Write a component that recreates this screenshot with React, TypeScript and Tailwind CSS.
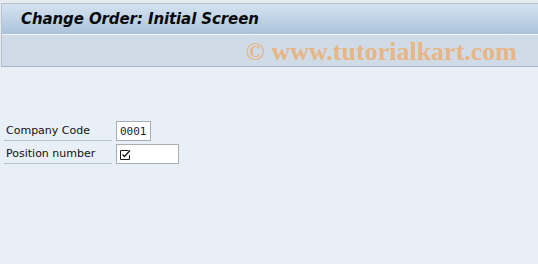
import React from "react";

function CheckGlyph() {
  return (
    <svg width="11" height="11" viewBox="0 0 11 11" className="block">
      <path d="M0.5 1.5 H8.5 M0.5 1.5 V10.5 H9.5 V6" stroke="#1a1a1a" strokeWidth="1" fill="none" />
      <path d="M2.5 5.5 L4.5 7.5 L10 1.5" stroke="#1a1a1a" strokeWidth="1.3" fill="none" />
    </svg>
  );
}

export default function App() {
  const rows = [
    { label: "Company Code", width: "w-[35px]", value: "0001" },
    { label: "Position number", width: "w-[63px]", value: "" },
  ];

  return (
    <div className="w-[538px] h-[264px] bg-[#e9eff7] overflow-hidden font-['DejaVu_Sans',sans-serif]">
      {/* Header frame */}
      <div className="pt-[3px] bg-[#e6ebf0]">
        <div className="ml-[1px] border-l border-t border-[#b4c0cc]">
          <div className="h-[30px] bg-gradient-to-b from-[#d6e3f0] to-[#abc3db] flex items-center pl-[19px]">
            <span className="text-[15px] font-bold italic text-[#0a0a0a] tracking-[-0.1px] leading-none">
              Change Order: Initial Screen
            </span>
          </div>
          <div className="h-[1px] bg-[#f2f6fa]" />
          <div className="h-[32px] bg-[#cfdce8] border-b border-[#a8b5c2] flex items-center justify-end pr-[21px]">
            <span className="font-['Liberation_Serif',serif] font-bold text-[26px] leading-none text-[#e8b584] pt-[2px]">
              © www.tutorialkart.com
            </span>
          </div>
        </div>
      </div>

      {/* Form */}
      <div className="pt-[54px] pl-[4px] flex flex-col gap-[3px]">
        {rows.map((r) => (
          <div key={r.label} className="flex items-end">
            <div className="w-[108px] h-[20px] border-b border-[#b9c1ca] flex items-center pl-[2px]">
              <span className="text-[11px] text-[#111] leading-none">{r.label}</span>
            </div>
            <div
              className={`${r.width} h-[20px] ml-[4px] bg-white border border-[#a5adb5] flex items-center pl-[3px]`}
            >
              {r.value ? (
                <span className="font-['DejaVu_Sans_Mono',monospace] text-[11px] text-[#1a1a40] leading-none">
                  {r.value}
                </span>
              ) : (
                <CheckGlyph />
              )}
            </div>
          </div>
        ))}
      </div>
    </div>
  );
}
